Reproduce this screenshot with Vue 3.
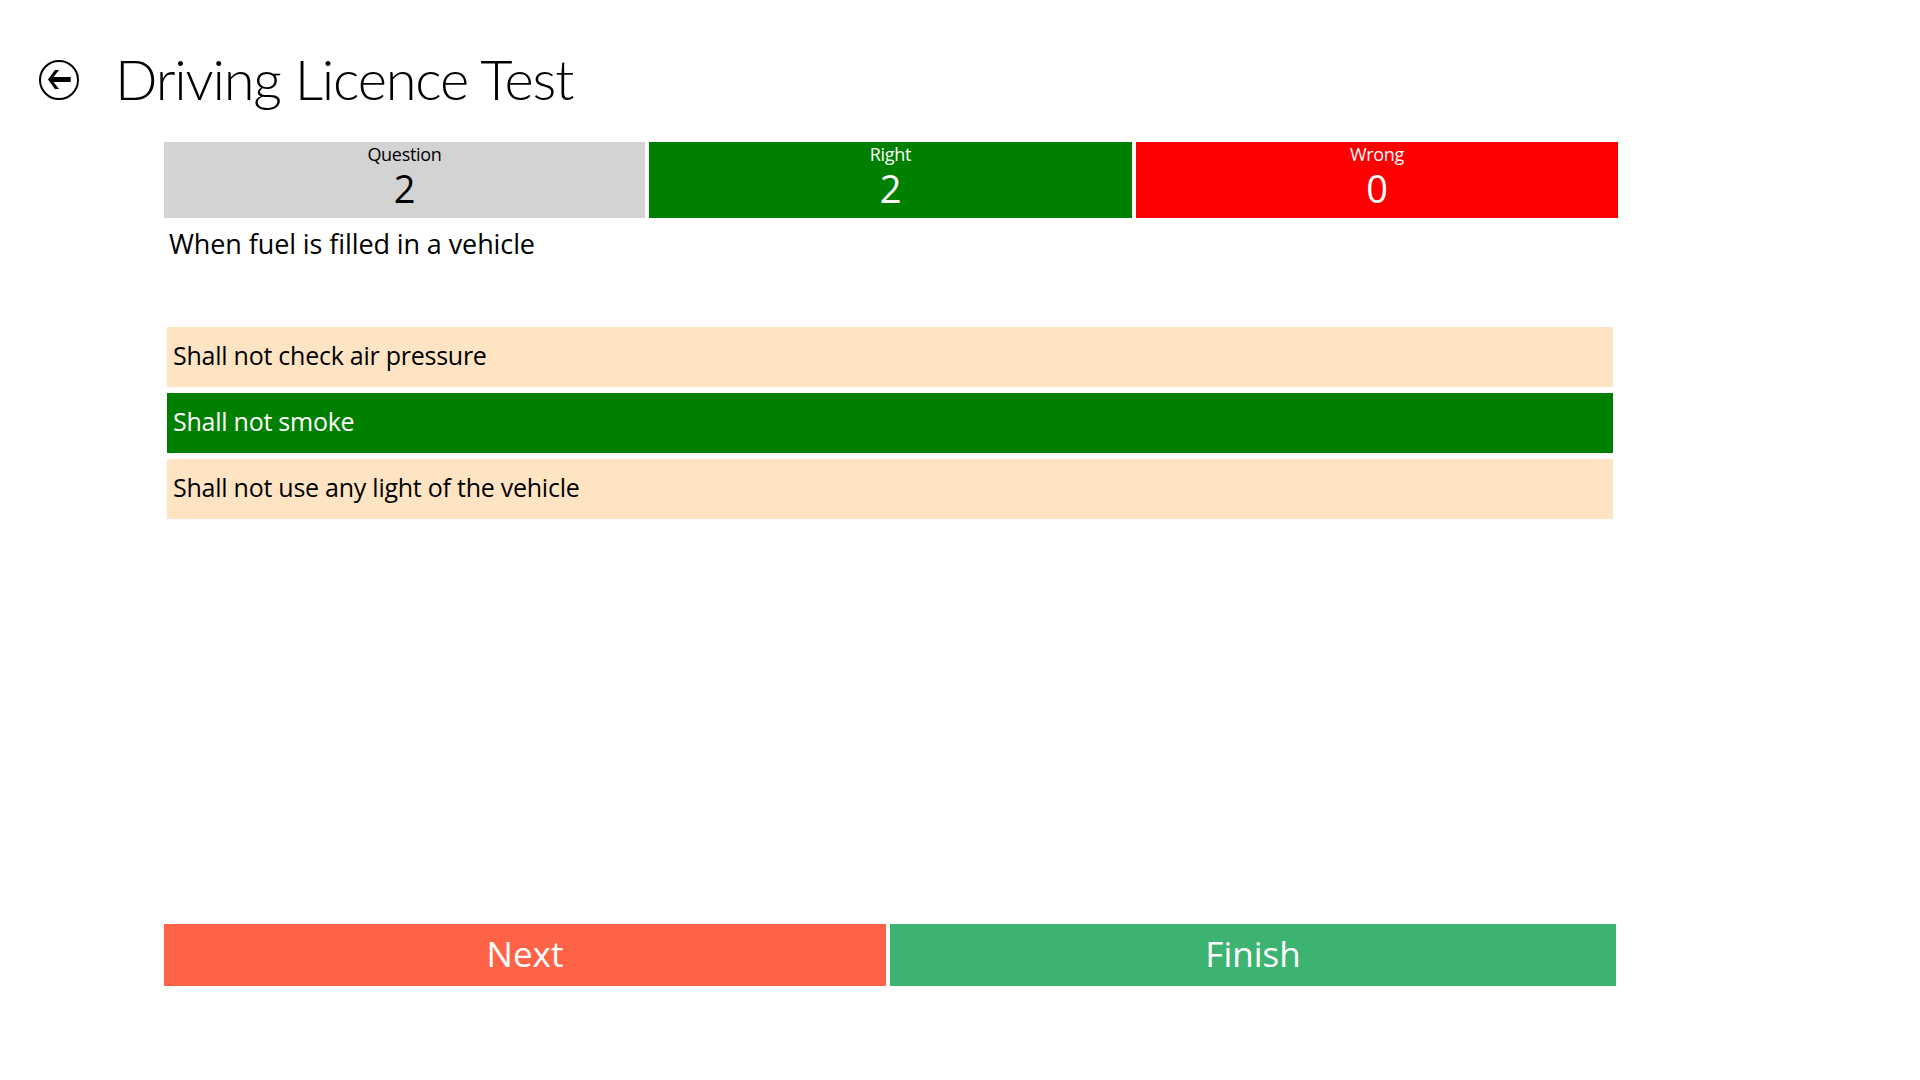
<script setup>
const stats = [
  { label: 'Question', value: 2, kind: 'grey' },
  { label: 'Right', value: 2, kind: 'green' },
  { label: 'Wrong', value: 0, kind: 'red' },
];

const answers = [
  { text: 'Shall not check air pressure', correct: false },
  { text: 'Shall not smoke', correct: true },
  { text: 'Shall not use any light of the vehicle', correct: false },
];
</script>

<template>
  <div class="page">
    <header class="top">
      <button type="button" class="back" aria-label="Back">
        <svg width="42" height="42" viewBox="0 0 42 42">
          <circle cx="21" cy="21" r="19" fill="none" stroke="#000" stroke-width="2" />
          <path d="M10 20.5 L17 11 L21 11 L15.5 18 L32.7 18 L32.7 23 L15.5 23 L21 30 L17 30 Z" fill="#000" />
        </svg>
      </button>
      <h1 class="title">Driving Licence Test</h1>
    </header>

    <main class="content">
      <section class="stats">
        <div v-for="s in stats" :key="s.label" class="stat" :class="s.kind">
          <span class="stat-label">{{ s.label }}</span>
          <span class="stat-value">{{ s.value }}</span>
        </div>
      </section>

      <p class="question">When fuel is filled in a vehicle</p>

      <ul class="answers">
        <li v-for="a in answers" :key="a.text" class="answer" :class="{ correct: a.correct }">
          {{ a.text }}
        </li>
      </ul>

      <div class="actions">
        <button type="button" class="action next">Next</button>
        <button type="button" class="action finish">Finish</button>
      </div>
    </main>
  </div>
</template>

<style>
html,
body {
  margin: 0;
  background: #fff;
}
</style>

<style scoped>
.page {
  width: 1920px;
  height: 1080px;
  overflow: hidden;
  box-sizing: border-box;
  font-family: 'Open Sans', 'Noto Sans', sans-serif;
  color: #000;
}

.top {
  display: flex;
  align-items: center;
  height: 142px;
  padding: 18px 0 0 38px;
  box-sizing: border-box;
}

.back {
  display: block;
  width: 42px;
  height: 42px;
  padding: 0;
  border: none;
  background: none;
}

.title {
  margin: -2px 0 0 35px;
  font-family: Lato, 'Open Sans', sans-serif;
  font-size: 56px;
  font-weight: 300;
  letter-spacing: -1.2px;
  line-height: 70px;
}

.content {
  margin-left: 164px;
  width: 1456px;
}

.stats {
  display: grid;
  grid-template-columns: 481px 483px 482px;
  column-gap: 4px;
  height: 76px;
}

.stat {
  display: flex;
  flex-direction: column;
  align-items: center;
  box-sizing: border-box;
}

.stat.grey {
  background: #d3d3d3;
}

.stat.green {
  background: #008000;
  color: #fff;
}

.stat.red {
  background: #f00;
  color: #fff;
}

.stat-label {
  height: 22px;
  font-size: 18px;
  line-height: 24px;
  letter-spacing: -0.3px;
}

.stat-value {
  font-size: 38px;
  line-height: 48px;
}

.question {
  margin: 8px 0 0 5px;
  height: 35px;
  font-size: 27px;
  line-height: 35px;
  letter-spacing: -0.1px;
}

.answers {
  display: flex;
  flex-direction: column;
  gap: 6px;
  margin: 66px 0 0 3px;
  padding: 0;
  width: 1446px;
  list-style: none;
}

.answer {
  height: 60px;
  padding-left: 6px;
  font-size: 25px;
  line-height: 56px;
  letter-spacing: -0.25px;
  background: #ffe4c4;
}

.answer.correct {
  background: #008000;
  color: #fff;
}

.actions {
  display: grid;
  grid-template-columns: 722px 726px;
  column-gap: 4px;
  margin-top: 405px;
}

.action {
  height: 62px;
  padding: 0 0 3px;
  border: none;
  font-family: inherit;
  font-size: 35px;
  color: #fff;
}

.next {
  background: #ff6347;
}

.finish {
  background: #3cb371;
}
</style>
